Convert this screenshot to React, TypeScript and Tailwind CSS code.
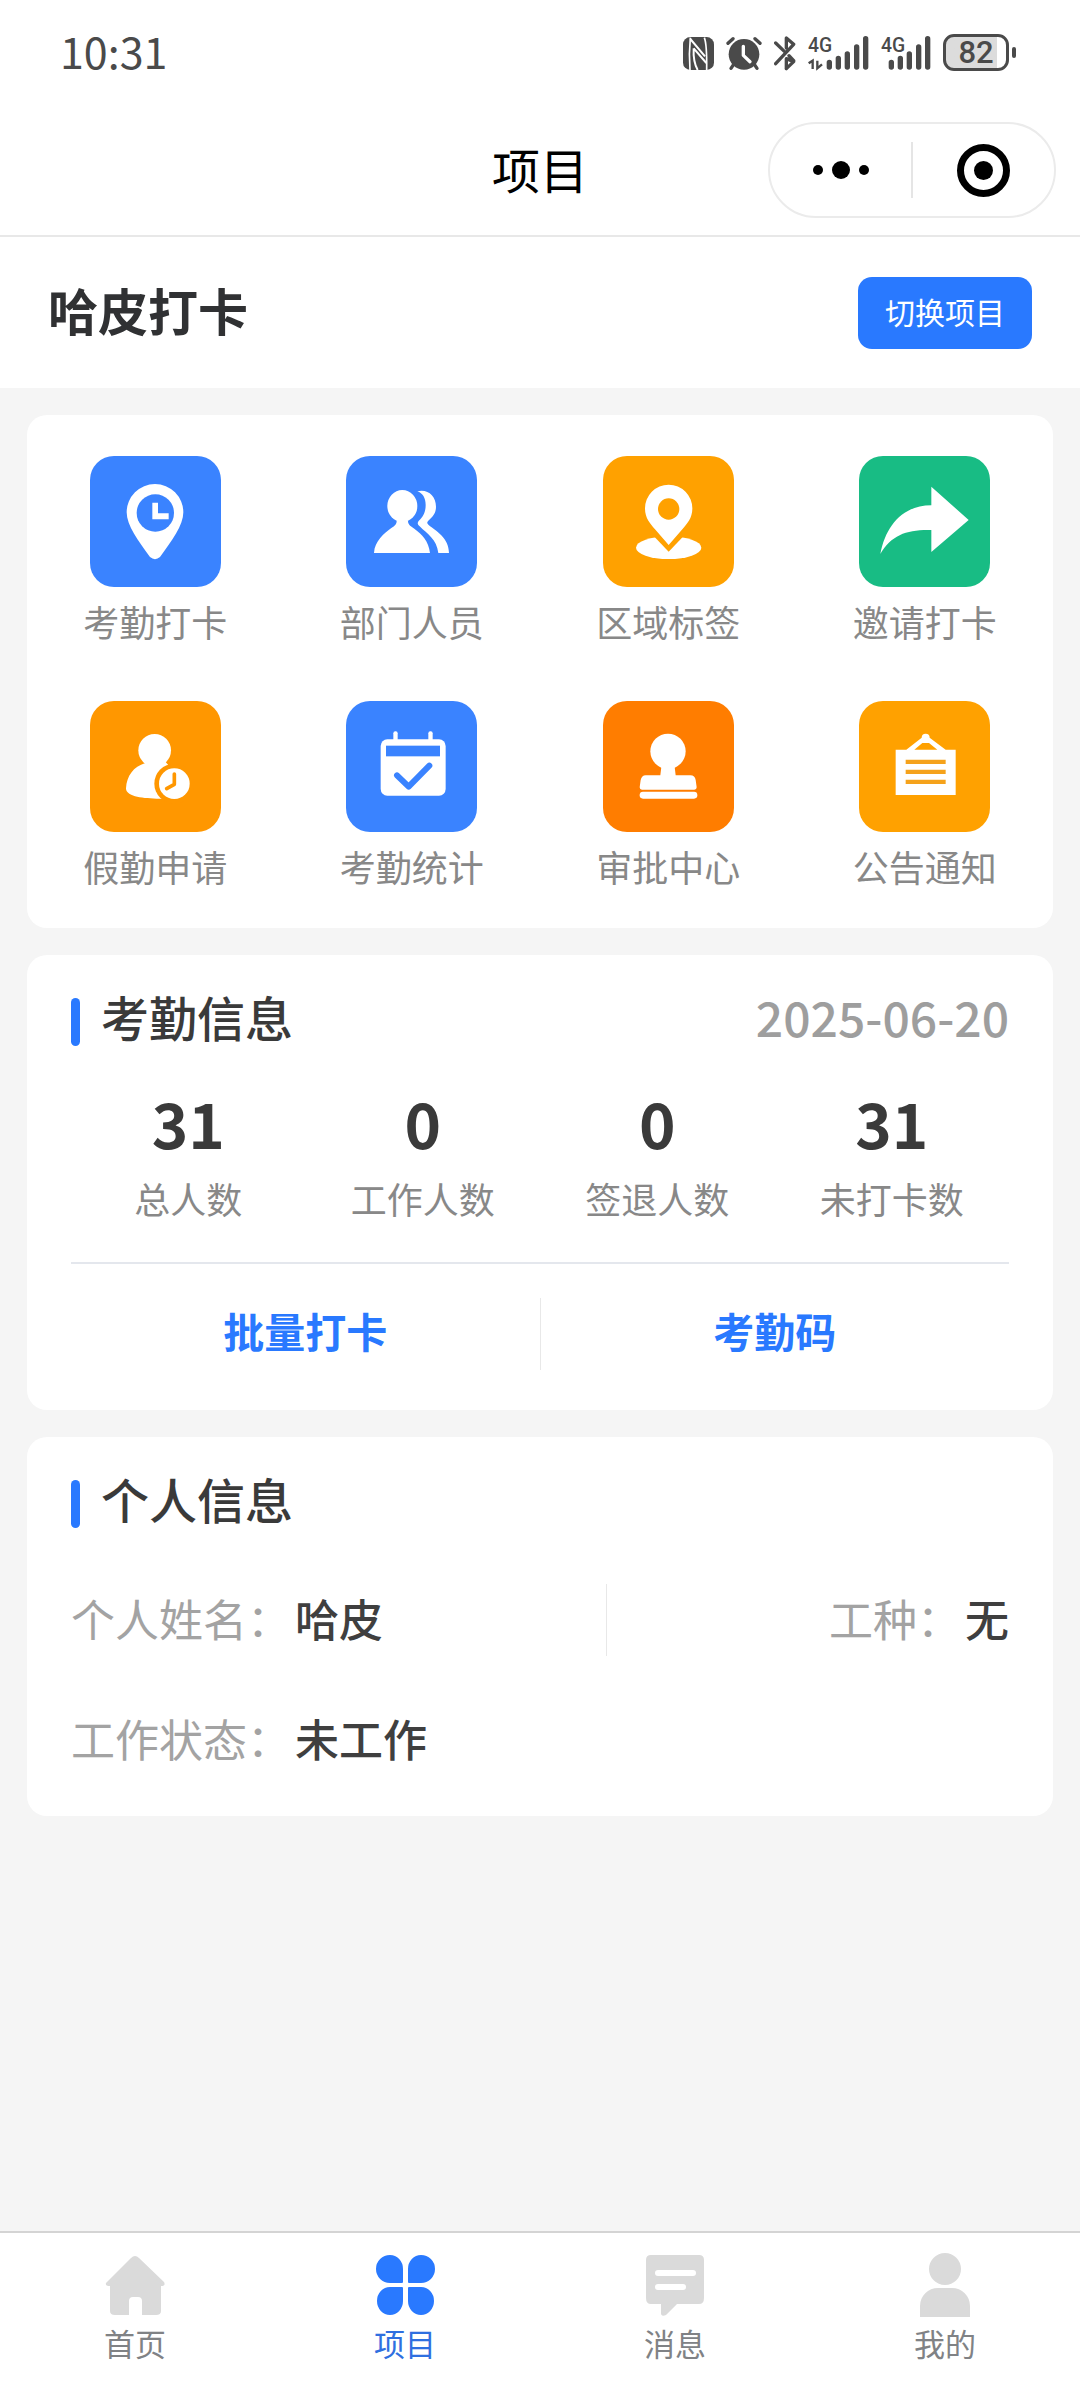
import React, { useState } from 'react';

interface AppEntry {
  label: string;
  bg: string;
  icon: React.ReactNode;
}

const apps: AppEntry[] = [
  {
    label: '考勤打卡',
    bg: 'bg-[#3a83ff]',
    icon: (
      <>
        <path fill="#fff" d="M195 84a85 85 0 0 1 85 85c0 40-35 86-70 134q-15 13-30 0c-35-48-70-94-70-134a85 85 0 0 1 85-85z" />
        <circle cx="196" cy="171" r="56" fill="#3a83ff" />
        <path fill="#fff" d="M187 140h17v32h32v18h-49z" />
      </>
    ),
  },
  {
    label: '部门人员',
    bg: 'bg-[#3a83ff]',
    icon: (
      <g fill="#fff">
        <ellipse cx="169" cy="150" rx="45" ry="48" />
        <path d="M84 291C86 255 115 232 135 217C148 208 152 204 152 194H186C186 204 190 208 205 218C228 235 248 255 252 291Z" />
        <path d="M214 106C245 98 270 120 270 152C270 170 262 180 253 188C244 196 240 201 248 207C270 225 309 245 309 291H277C272 250 245 235 221 211C213 204 214 200 220 193C230 183 239 170 239 147C239 125 230 112 214 106Z" />
      </g>
    ),
  },
  {
    label: '区域标签',
    bg: 'bg-[#ffa100]',
    icon: (
      <>
        <ellipse cx="197" cy="275" rx="98" ry="34" fill="#fff" />
        <path fill="#ffa100" d="M152 240l45 47 45-47z" />
        <path fill="#fff" d="M197 86a71 71 0 0 1 71 72c0 28-16 45-30 62l-41 47-41-47c-14-17-30-34-30-62a71 71 0 0 1 71-72z" />
        <circle cx="197" cy="159" r="32" fill="#ffa100" />
      </>
    ),
  },
  {
    label: '邀请打卡',
    bg: 'bg-[#18bc84]',
    icon: <path fill="#fff" d="M217 92L329 192L217 288V222C145 220 98 236 64 294C80 210 130 148 217 148Z" />,
  },
  {
    label: '假勤申请',
    bg: 'bg-[#ff9700]',
    icon: (
      <>
        <circle cx="194" cy="148" r="49" fill="#fff" />
        <path fill="#fff" d="M162 182H226L238 196L228 293H200C150 292 108 285 108 262C110 225 130 197 166 186z" />
        <circle cx="253" cy="248" r="60" fill="#ff9700" />
        <circle cx="253" cy="248" r="46" fill="#fff" />
        <path d="M253 219v31l-23 13" fill="none" stroke="#ff9700" strokeWidth="11" strokeLinecap="round" strokeLinejoin="round" />
      </>
    ),
  },
  {
    label: '考勤统计',
    bg: 'bg-[#3a83ff]',
    icon: (
      <>
        <rect x="104" y="115" width="195" height="169" rx="20" fill="#fff" />
        <rect x="142" y="91" width="13" height="34" rx="6" fill="#fff" />
        <rect x="247" y="91" width="13" height="34" rx="6" fill="#fff" />
        <rect x="120" y="134" width="162" height="32" fill="#3a83ff" />
        <path d="M153 223l35 34 62-63" fill="none" stroke="#3a83ff" strokeWidth="18" strokeLinecap="round" strokeLinejoin="round" />
      </>
    ),
  },
  {
    label: '审批中心',
    bg: 'bg-[#ff7d00]',
    icon: (
      <g fill="#fff">
        <circle cx="195" cy="151" r="53" />
        <path d="M176 190h38l4 33h44q14 0 16 14l3 22q0 7-7 7H117q-7 0-7-7l3-22q3-14 15-14h44z" />
        <rect x="110" y="272" width="173" height="21" rx="10" />
      </g>
    ),
  },
  {
    label: '公告通知',
    bg: 'bg-[#ffa100]',
    icon: (
      <>
        <path fill="#fff" fillRule="evenodd" d="M110 146h32l46-36a12 12 0 0 1 24 0l48 36h30v136H110zM166 146h69l-25-20h-20z" />
        <path fill="#f5a21b" d="M140 176h120v13H140zM140 206h120v13H140zM140 236h120v13H140z" />
      </>
    ),
  },
];

const stats = [
  { label: '总人数', value: 31 },
  { label: '工作人数', value: 0 },
  { label: '签退人数', value: 0 },
  { label: '未打卡数', value: 31 },
];

const tabs = [
  {
    label: '首页',
    icon: (
      <path d="M26 4q4-4 8 0l25 24q2 4-3 4v25q0 4-5 4H37V47q0-4-4-4h-5q-4 0-4 4v14H10q-5 0-5-4V32q-5 0-4-3z" />
    ),
  },
  {
    label: '项目',
    icon: (
      <path d="M15 1a13 14 0 0 1 13 14v13q0 1-1 1H15a14 14 0 0 1 0-28zM46 1a14 14 0 0 1 0 28H34q-1 0-1-1V15a13 14 0 0 1 13-14zM15 33h12q1 0 1 1v13a13 14 0 1 1-13-14zM34 33h12a13 14 0 1 1-13 14V34q0-1 1-1z" />
    ),
  },
  {
    label: '消息',
    icon: (
      <path fillRule="evenodd" d="M6 1h48q5 0 5 5v38q0 6-5 6H32L21 61q-5 2-5-2v-9H6q-5 0-5-6V6q0-5 5-5zM13 16a3 3 0 0 0 0 6h35a3 3 0 0 0 0-6zM13 30a3 3 0 0 0 0 6h25a3 3 0 0 0 0-6z" />
    ),
  },
  {
    label: '我的',
    icon: <path d="M30-1a16 16 0 0 1 0 32a16 16 0 0 1 0-32zM23 34h14a18 18 0 0 1 18 18v11H5V52a18 18 0 0 1 18-18z" />,
  },
];

const StatusBar: React.FC = () => (
  <div className="flex h-[105px] items-center justify-between pr-16 pl-[60px] text-[#4a4a4a]">
    <time className="pb-1 text-[43px] leading-none">10:31</time>
    <div className="flex items-center gap-3">
      {/* NFC */}
      <svg width="31" height="37" viewBox="78 69 93 111" fill="currentColor">
        <rect x="78" y="78" width="93" height="99" rx="22" />
        <path d="M100 80q-5 50-1 97M142 80q8 20 7 97" fill="none" stroke="#fff" strokeWidth="5" />
        <path d="M100 84l44 52M110 112l38 44M110 112q-2 40 12 65" fill="none" stroke="#fff" strokeWidth="6" />
      </svg>
      {/* Alarm */}
      <svg width="36" height="37" viewBox="205 69 108 111" fill="none" stroke="currentColor" strokeLinecap="round">
        <circle cx="259" cy="130" r="46" fill="currentColor" stroke="none" />
        <path d="M211 97l15-14M307 97l-15-14" strokeWidth="10" />
        <path d="M228 160l-8 12M290 160l8 12" strokeWidth="10" />
        <path d="M257 106v27l20 19" stroke="#fff" strokeWidth="10" strokeLinejoin="round" />
      </svg>
      {/* Bluetooth */}
      <svg width="22" height="37" viewBox="347 69 66 111" fill="none" stroke="currentColor" strokeWidth="10" strokeLinecap="round" strokeLinejoin="round">
        <path d="M352 96l26 25M352 158l54-58-22-19v30M384 173v-30l22 9-22 21M392 134l14 15" />
      </svg>
      <svg width="61" height="37" viewBox="446 69 183 111" fill="currentColor" className="overflow-visible font-['Roboto',sans-serif] font-medium">
        <text x="446" y="122" fontSize="58">4G</text>
        <path d="M448 157l12-8v25M474 149v23l14-12" fill="none" stroke="currentColor" strokeWidth="7" />
        <path d="M510 154v14M537 142v26M564 129v39M592 108v60M619 83v85" stroke="currentColor" strokeWidth="16" strokeLinecap="round" />
      </svg>
      <svg width="50" height="37" viewBox="663 69 150 111" fill="currentColor" className="overflow-visible font-['Roboto',sans-serif] font-medium">
        <text x="663" y="122" fontSize="58">4G</text>
        <path d="M694 154v14M721 142v26M748 129v39M776 108v60M803 83v85" stroke="currentColor" strokeWidth="16" strokeLinecap="round" />
      </svg>
      <div className="flex items-center gap-[3px]">
        <div className="flex h-[37px] w-[66px] items-center justify-center rounded-[11px] border-[3px] border-current bg-linear-to-r from-[#dcdcdc] from-85% to-white to-85% font-['Roboto',sans-serif] text-[31px] leading-none font-medium">
          82
        </div>
        <div className="h-[11px] w-1 rounded-full bg-current" />
      </div>
    </div>
  </div>
);

const NavBar: React.FC = () => (
  <header className="grid h-[132px] grid-cols-3 items-center border-b-2 border-[#e8e8e8] px-6">
    <h1 className="col-start-2 pb-1 text-center text-[48px] leading-none text-black">项目</h1>
    <div className="flex h-24 w-72 items-center justify-self-end rounded-full border-2 border-[#ebebeb]">
      <button type="button" aria-label="更多" className="flex flex-1 items-center justify-center gap-[9px]">
        <span className="size-[10px] rounded-full bg-black" />
        <span className="size-[18px] rounded-full bg-black" />
        <span className="size-[10px] rounded-full bg-black" />
      </button>
      <span className="h-14 w-0.5 bg-[#e5e5e5]" />
      <button type="button" aria-label="关闭" className="flex flex-1 items-center justify-center">
        <span className="flex size-[53px] items-center justify-center rounded-full border-[7px] border-black">
          <span className="size-[19px] rounded-full bg-black" />
        </span>
      </button>
    </div>
  </header>
);

const SectionTitle: React.FC<{ children: React.ReactNode }> = ({ children }) => (
  <div className="flex items-start gap-[21px]">
    <span className="h-12 w-[9px] rounded-full bg-[#2979ff]" />
    <h2 className="text-[48px] leading-9 font-medium text-[#3a3a3a]">{children}</h2>
  </div>
);

const Field: React.FC<{ label: string; value: string }> = ({ label, value }) => (
  <div className="flex gap-1 text-[44px] leading-12">
    <dt className="text-[#a3a3a3]">{label}：</dt>
    <dd className="font-medium text-[#3f3f3f]">{value}</dd>
  </div>
);

export default function App() {
  const [activeTab, setActiveTab] = useState('项目');

  return (
    <div className="flex min-h-screen flex-col bg-[#f5f5f5] font-['Noto_Sans_CJK_SC',sans-serif]">
      <div className="bg-white">
        <StatusBar />
        <NavBar />
        <div className="flex h-[151px] items-center justify-between px-12">
          <h2 className="pb-2 text-[50px] leading-none font-bold text-[#303133]">哈皮打卡</h2>
          <button type="button" className="h-[72px] rounded-[14px] bg-[#2979ff] px-[27px] pb-1 text-[30px] leading-none text-white">
            切换项目
          </button>
        </div>
      </div>

      <main className="flex flex-1 flex-col gap-[27px] p-[27px]">
        {/* App shortcuts */}
        <section className="grid grid-cols-4 gap-y-14 rounded-[20px] bg-white pt-[41px] pb-[38px]">
          {apps.map((app) => (
            <button key={app.label} type="button" className="flex flex-col items-center gap-[10px]">
              <span className={`block size-[131px] rounded-3xl ${app.bg}`}>
                <svg viewBox="0 0 393 393" className="size-full">{app.icon}</svg>
              </span>
              <span className="text-[36px] leading-12 text-[#888888]">{app.label}</span>
            </button>
          ))}
        </section>

        {/* Attendance */}
        <section className="rounded-[20px] bg-white px-11 pt-[43px] pb-10">
          <div className="flex items-start justify-between">
            <SectionTitle>考勤信息</SectionTitle>
            <time className="text-[48px] leading-9 font-medium text-[#9e9e9e]">2025-06-20</time>
          </div>
          <dl className="mt-11 grid grid-cols-4 text-center">
            {stats.map((s) => (
              <div key={s.label} className="flex flex-col-reverse gap-5">
                <dt className="text-[36px] leading-12 text-[#888888]">{s.label}</dt>
                <dd className="text-[62px] leading-16 font-bold text-[#3a3a3a]">{s.value}</dd>
              </div>
            ))}
          </dl>
          <div className="mt-10 flex items-start border-t-2 border-[#e4e7ed] pt-[34px] text-[41px] leading-16 font-bold text-[#2979ff]">
            <button type="button" className="flex-1">批量打卡</button>
            <span className="h-[72px] w-px bg-[#e8e8e8]" />
            <button type="button" className="flex-1">考勤码</button>
          </div>
        </section>

        {/* Personal info */}
        <section className="rounded-[20px] bg-white px-11 pt-[43px] pb-[54px]">
          <SectionTitle>个人信息</SectionTitle>
          <dl className="mt-14 grid grid-cols-[4fr_3fr] gap-y-[58px]">
            <div className="flex h-[72px] items-center border-r border-[#e8e8e8] pb-1">
              <Field label="个人姓名" value="哈皮" />
            </div>
            <div className="flex items-center justify-end pb-1">
              <Field label="工种" value="无" />
            </div>
            <Field label="工作状态" value="未工作" />
          </dl>
        </section>
      </main>

      <nav className="grid h-[151px] grid-cols-4 border-t-2 border-[#d4d4d4] bg-white">
        {tabs.map((tab) => {
          const active = tab.label === activeTab;
          return (
            <button key={tab.label} type="button" onClick={() => setActiveTab(tab.label)} className="flex flex-col items-center gap-1 pt-5">
              <svg width="60" height="64" viewBox="0 -1 60 64" className={active ? 'fill-[#2979ff]' : 'fill-[#dadada]'}>
                {tab.icon}
              </svg>
              <span className={`text-[31px] leading-11 ${active ? 'text-[#2f6fe0]' : 'text-[#808285]'}`}>{tab.label}</span>
            </button>
          );
        })}
      </nav>
    </div>
  );
}
